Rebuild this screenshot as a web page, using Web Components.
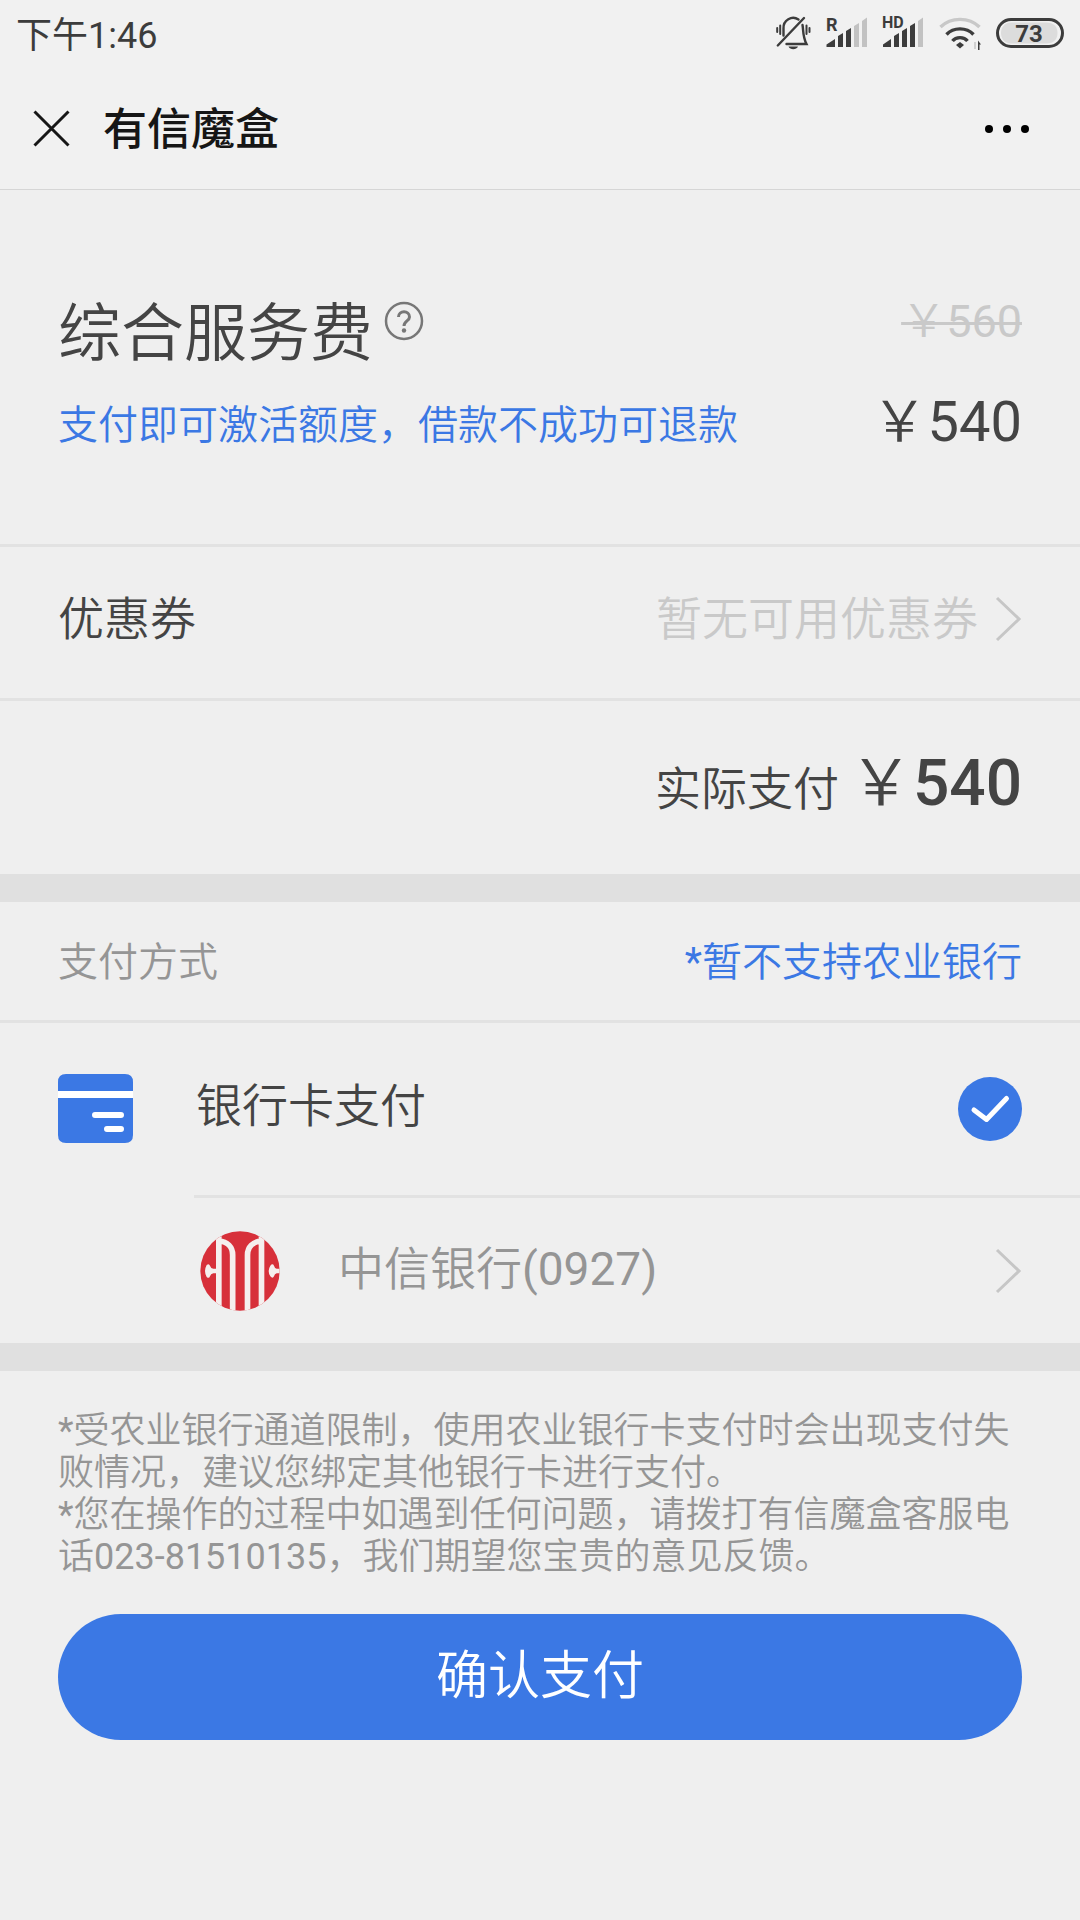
<!DOCTYPE html>
<html lang="zh-CN">
<head>
<meta charset="utf-8">
<meta name="viewport" content="width=device-width, initial-scale=1">
<title>有信魔盒</title>
<style>
  :root {
    --blue: #3b78e4;
    --ink: #444;
    --muted: #959595;
    --faint: #c9c9c9;
    --line: #e2e2e2;
    --gutter: 58px;
    --system-font: Roboto, "Noto Sans CJK SC", sans-serif;
  }
  body {
    margin: 0;
    min-height: 100vh;
    background: #efefef;
    color: var(--ink);
    font-family: Roboto, "Noto Sans CJK SC DemiLight", "Noto Sans CJK SC", sans-serif;
  }
</style>
</head>
<body>
<pay-page></pay-page>

<script>
const define = (name, html) => {
  const template = document.createElement('template');
  template.innerHTML = html;
  customElements.define(name, class extends HTMLElement {
    constructor() {
      super();
      this.attachShadow({ mode: 'open' }).append(template.content.cloneNode(true));
    }
  });
};

const reset = `
  :host, * { box-sizing: border-box; }
  svg { display: block; flex: none; }
  button { font: inherit; color: inherit; background: none; border: 0; padding: 0; margin: 0; cursor: pointer; }
`;

define('status-bar', `
  <style>${reset}
    :host { display: flex; align-items: center; justify-content: space-between; height: 68px; padding: 0 16px; color: #3c3c3c; font-family: var(--system-font); background: #f1f1f1; }
    time { padding-top: 4px; font-size: 36px; line-height: 48px; }
    .icons { display: flex; gap: 14px; }
    text { font-family: Roboto, sans-serif; font-weight: 700; fill: #3c3c3c; }
  </style>
  <time>下午1:46</time>
  <div class="icons">
    <svg width="36" height="44" viewBox="0 -4 36 44" fill="none" stroke="#3c3c3c" stroke-width="2.400" stroke-linecap="round">
      <path d="M7.500 19.500V12.500A9.700 10 0 0 1 22.500 3.500M26.500 9C27.500 14 26.500 20 30.500 28H10.500"/>
      <path d="M1.800 29.500L28 2"/>
      <path d="M4.200 9.500V18M1.200 12V16M30.500 9.500V18M33.500 12V16" stroke-width="2"/>
      <path d="M12.500 30.500H22C20.500 34 14 34 12.500 30.500Z" fill="#3c3c3c" stroke="none"/>
    </svg>
    <svg width="42" height="44" viewBox="0 -4 42 44">
      <path fill="#3c3c3c" d="M.5 31V28.500L9 23V31ZM12 31V20L17 17V31ZM20 31V15L25 12V31Z"/>
      <path fill="#c2c2c2" d="M28 31V10L33 7V31ZM36 31V5L41 1.500V31Z"/>
      <text x="0" y="15" font-size="18">R</text>
    </svg>
    <svg width="42" height="44" viewBox="0 -4 42 44">
      <path fill="#3c3c3c" d="M1 31V28.500L9 23V31ZM12 31V20L17 17V31ZM20 31V15L25 12V31ZM28 31V10L33 7V31Z"/>
      <path fill="#c2c2c2" d="M36 31V5L41 1.500V31Z"/>
      <text x="0" y="12" font-size="16">HD</text>
    </svg>
    <svg width="44" height="44" viewBox="0 -4 44 44" fill="none" stroke="#3c3c3c" stroke-width="3.400">
      <path d="M2.500 11C13 .8 31 .8 41.500 11" stroke="#c8c8c8"/>
      <path d="M8.500 18.500C15.500 11 28.500 11 35.500 18.500"/>
      <path d="M14.500 25C18 20.500 26 20.500 29.500 25"/>
      <path d="M18 29L22 26L26 29L22 32.500Z" fill="#3c3c3c" stroke="none"/>
      <path d="M37 26V33" stroke="#d0d0d0" stroke-width="2"/>
      <path d="M40 34V24.500L43 28.500H41.500V34Z" fill="#3c3c3c" stroke="none"/>
    </svg>
    <svg width="68" height="44" viewBox="0 -4 68 44">
      <rect x="1.500" y="3.500" width="65" height="27" rx="13.500" fill="none" stroke="#3c3c3c" stroke-width="3"/>
      <path d="M15 6.500H50C58 6.500 61.500 11 61.500 17S58 27.500 50 27.500H15C8 27.500 5 22 5 17S8 6.500 15 6.500Z" fill="#dcdcdc"/>
      <text x="33" y="26" font-size="24" text-anchor="middle">73</text>
    </svg>
  </div>
`);

define('nav-bar', `
  <style>${reset}
    :host { display: flex; align-items: center; height: 122px; padding: 0 50px 0 32px; background: #f1f1f1; border-bottom: 1px solid #d6d6d6; }
    h1 { flex: 1; margin: 0 0 0 31px; padding-top: 2px; font-family: var(--system-font); font-size: 44px; line-height: 60px; font-weight: 500; color: #161616; }
  </style>
  <button type="button" aria-label="关闭">
    <svg width="40" height="40" viewBox="0 0 40 40" fill="none" stroke="#161616" stroke-width="3"><path d="M2.500 2.500L36.500 36.500M36.500 2.500L2.500 36.500"/></svg>
  </button>
  <h1><slot></slot></h1>
  <button type="button" aria-label="更多">
    <svg width="46" height="10" viewBox="0 0 46 10" fill="#000"><circle cx="5" cy="5" r="4"/><circle cx="23" cy="5" r="4"/><circle cx="41" cy="5" r="4"/></svg>
  </button>
`);

define('fee-summary', `
  <style>${reset}
    :host { display: flex; justify-content: space-between; padding: 104px var(--gutter) 88px; }
    h2 { display: flex; gap: 11px; margin: 0; font-size: 63px; line-height: 80px; font-weight: inherit; }
    h2 button { align-self: flex-start; padding-top: 7px; }
    p { margin: 22px 0 0; font-size: 40px; line-height: 60px; color: var(--blue); }
    .prices { display: flex; flex-direction: column; align-items: flex-end; gap: 40px; }
    del { font-size: 45px; line-height: 56px; color: var(--faint); text-decoration-thickness: 3px; }
    .now { font-size: 56px; line-height: 64px; }
  </style>
  <div>
    <h2>综合服务费
      <button type="button" aria-label="费用说明">
        <svg width="40" height="40" viewBox="0 0 40 40" fill="none" stroke="#777" stroke-width="2.500">
          <circle cx="20" cy="20" r="18"/>
          <path d="M14.500 16C14.500 9 25.500 9 25.500 16C25.500 20 20 20 20 25" stroke-width="3"/>
          <circle cx="20" cy="29.500" r="2.200" fill="#777" stroke="none"/>
        </svg>
      </button>
    </h2>
    <p>支付即可激活额度，借款不成功可退款</p>
  </div>
  <div class="prices">
    <del>￥560</del>
    <span class="now">￥540</span>
  </div>
`);

define('chevron-right', `
  <style>${reset} :host { display: block; flex: none; }</style>
  <svg width="28" height="48" viewBox="0 0 28 48" fill="none" stroke="#c6c6c6" stroke-width="3"><path d="M3 3L25 24L3 45"/></svg>
`);

define('coupon-row', `
  <style>${reset}
    :host { display: block; border-top: 3px solid var(--line); }
    button { display: flex; align-items: center; width: 100%; height: 151px; padding: 0 var(--gutter) 8px; font-size: 46px; line-height: 60px; text-align: left; }
    span { flex: 1; }
    em { font-style: normal; color: var(--faint); margin-right: 16px; }
  </style>
  <button type="button"><span>优惠券</span><em><slot></slot></em><chevron-right></chevron-right></button>
`);

define('total-row', `
  <style>${reset}
    :host { display: flex; align-items: center; justify-content: flex-end; height: 176px; padding: 0 var(--gutter) 2px; border-top: 3px solid var(--line); }
    p { display: flex; align-items: baseline; gap: 10px; margin: 0; font-size: 46px; line-height: 64px; }
    strong { font-size: 64px; font-weight: 500; }
  </style>
  <p><span>实际支付</span><strong>￥<slot></slot></strong></p>
`);

define('section-band', `
  <style>:host { display: block; height: 28px; background: #e0e0e0; }</style>
`);

define('pay-method', `
  <style>${reset}
    :host { display: block; }
    header { display: flex; align-items: center; justify-content: space-between; height: 121px; padding: 4px var(--gutter) 0; font-size: 40px; line-height: 56px; border-bottom: 3px solid var(--line); }
    h2 { margin: 0; font: inherit; color: var(--muted); }
    header > span { color: var(--blue); }
    label { display: flex; align-items: center; height: 172px; padding: 0 var(--gutter); font-size: 46px; line-height: 60px; }
    label > span { flex: 1; margin-left: 62px; padding-bottom: 6px; }
    .tick { display: grid; width: 64px; }
    .tick > * { grid-area: 1 / 1; }
    input { appearance: none; width: 64px; height: 64px; margin: 0; border-radius: 50%; border: 3px solid var(--faint); }
    input:checked { background: var(--blue); border: 0; }
    input:not(:checked) + svg { visibility: hidden; }
    .bank { display: flex; align-items: center; width: calc(100% - 194px); height: 148px; margin-left: 194px; padding: 0 var(--gutter) 0 6px; border-top: 3px solid var(--line); font-size: 46px; line-height: 60px; color: var(--muted); text-align: left; }
    .name { flex: 1; margin-left: 58px; padding-bottom: 4px; }
  </style>
  <header><h2>支付方式</h2><span>*暂不支持农业银行</span></header>
  <label for="card">
    <svg width="76" height="72" viewBox="0 0 76 72">
      <path fill="#3b78e4" d="M0 19V9Q0 1 8 1H67Q75 1 75 9V19ZM0 25H75V62Q75 70 67 70H8Q0 70 0 62Z"/>
      <path fill="#fff" d="M0 18H75V25H0Z"/>
      <path stroke="#fff" stroke-width="6" stroke-linecap="round" d="M37 42H63M49 56H63"/>
    </svg>
    <span>银行卡支付</span>
    <div class="tick">
      <input type="radio" id="card" name="method" checked>
      <svg width="64" height="64" viewBox="0 0 64 64" fill="none" stroke="#fff" stroke-width="5" stroke-linecap="round" stroke-linejoin="round"><path d="M16 33L28.500 42.500L48.500 21.500"/></svg>
    </div>
  </label>
  <button type="button" class="bank">
    <svg width="80" height="80" viewBox="602 544 240 240">
      <clipPath id="disc"><circle cx="722" cy="664" r="119"/></clipPath>
      <g clip-path="url(#disc)">
        <path fill="#d7303a" d="M602 544H842V784H602Z"/>
        <g fill="none" stroke="#f5efee" stroke-width="17">
          <path d="M658.500 560V790M658.500 574C684 576 700 592 700 616V790"/>
          <path d="M786.500 560V790M786.500 574C761 576 744.500 592 744.500 616V790"/>
        </g>
        <path fill="#f5efee" d="M652 657H642Q634 656 632 648Q629 640 622 646Q612 664 622 682Q629 688 632 680Q634 672 642 671H652Z"/>
        <path fill="#f5efee" d="M845 657H832Q826 656 824 648Q820 640 813 648Q803 664 813 680Q820 688 824 680Q826 672 832 671H845Z"/>
      </g>
    </svg>
    <span class="name">中信银行(0927)</span>
    <chevron-right></chevron-right>
  </button>
`);

define('pay-notes', `
  <style>${reset}
    :host { display: block; padding: 39px var(--gutter) 0; font-size: 36px; line-height: 42px; color: var(--muted); }
    p { margin: 0; }
  </style>
  <p>*受农业银行通道限制，使用农业银行卡支付时会出现支付失败情况，建议您绑定其他银行卡进行支付。</p>
  <p>*您在操作的过程中如遇到任何问题，请拨打有信魔盒客服电话023-81510135，我们期望您宝贵的意见反馈。</p>
`);

define('confirm-button', `
  <style>${reset}
    :host { display: block; padding: 36px var(--gutter); }
    button { width: 100%; height: 126px; border-radius: 63px; background: var(--blue); color: #fff; font-size: 52px; line-height: 64px; }
  </style>
  <button type="button"><slot></slot></button>
`);

define('pay-page', `
  <style>:host { display: block; } main { display: block; }</style>
  <status-bar></status-bar>
  <nav-bar>有信魔盒</nav-bar>
  <main>
    <fee-summary></fee-summary>
    <coupon-row>暂无可用优惠券</coupon-row>
    <total-row>540</total-row>
    <section-band></section-band>
    <pay-method></pay-method>
    <section-band></section-band>
    <pay-notes></pay-notes>
    <confirm-button>确认支付</confirm-button>
  </main>
`);
</script>
</body>
</html>
